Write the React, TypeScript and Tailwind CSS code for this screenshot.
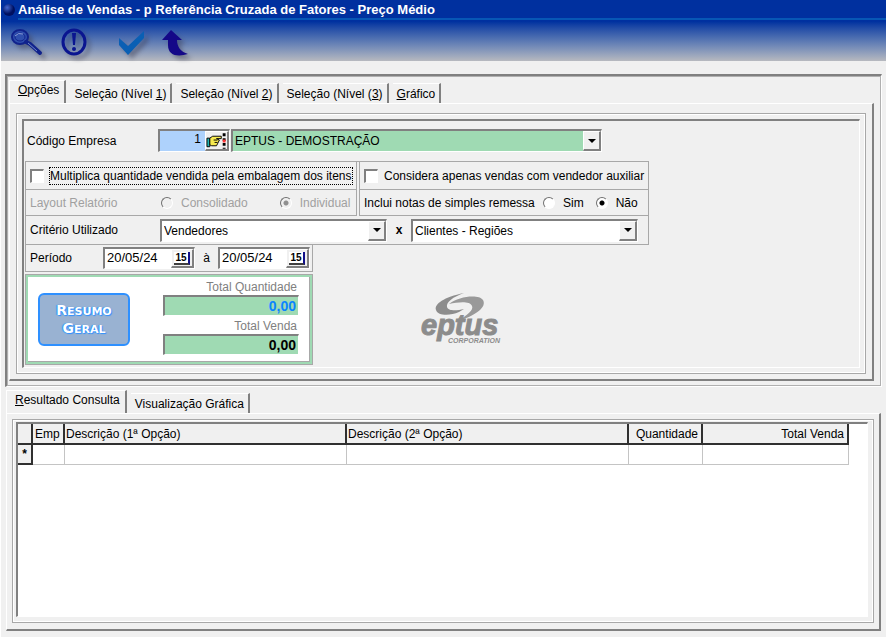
import { useState, type ReactNode } from "react";

const raised =
  "border-t border-l border-r-2 border-b-2 border-t-white border-l-white border-r-[#808080] border-b-[#808080] bg-[#f0f0f0]";
const sunken =
  "border-t-2 border-l-2 border-r border-b border-t-[#808080] border-l-[#808080] border-r-white border-b-white";
const cell = "border-r border-b border-[#a8a8a8]";

function Tab({ active, onClick, children }: { active: boolean; onClick: () => void; children: ReactNode }) {
  return (
    <button
      type="button"
      role="tab"
      aria-selected={active}
      onClick={onClick}
      className={
        active
          ? "h-[23px] border-t border-l border-r-2 border-t-white border-l-white border-r-[#808080] pr-[5px] pb-1 pl-2 leading-4"
          : "h-5 border-t border-r-2 border-t-white border-r-[#808080] px-1 leading-4"
      }
    >
      {children}
    </button>
  );
}

function TabPage({ compact, children }: { compact?: boolean; children: ReactNode }) {
  return (
    <div
      className={`flex grow flex-col border-t border-l border-r-2 border-b-2 border-t-white border-l-white border-r-[#808080] border-b-[#808080] ${
        compact ? "px-[5px] pt-[5px] pb-[6px]" : "px-[6px] pt-[9px] pb-[5px]"
      }`}
    >
      <div className="flex grow flex-col border border-[#a8a8a8]">
        <div className={`flex grow flex-col border border-white ${compact ? "pt-px pr-[4px] pb-[4px] pl-[2px]" : "p-1"}`}>{children}</div>
      </div>
    </div>
  );
}

function Combo({ label, options, tone, className }: { label: string; options: string[]; tone: string; className: string }) {
  return (
    <div className={`relative h-[23px] ${sunken} ${tone} ${className}`}>
      <select aria-label={label} className="block h-full w-full appearance-none bg-transparent pr-5 pl-[2px] leading-4 outline-none">
        {options.map((o) => (
          <option key={o}>{o}</option>
        ))}
      </select>
      <span className={`pointer-events-none absolute inset-y-0 right-0 flex w-[18px] items-center justify-center ${raised}`}>
        <svg width="8" height="4" viewBox="0 0 8 4" aria-hidden="true">
          <path d="M0 0h8L4 4z" fill="#000" />
        </svg>
      </span>
    </div>
  );
}

function DateField({ label }: { label: string }) {
  return (
    <div className={`flex h-[22px] w-[92px] bg-white ${sunken}`}>
      <input aria-label={label} defaultValue="20/05/24" className="w-0 grow pb-[2px] pl-[2px] text-[13px] leading-4 outline-none" />
      <button type="button" aria-label={`Calendário ${label}`} className={`flex w-[23px] items-center justify-center ${raised}`}>
        <span className="h-[13px] border-r-2 border-b-2 border-r-[#10108a] border-b-[#404040] bg-white px-px text-[10px] leading-[11px] font-bold">15</span>
      </button>
    </div>
  );
}

function Radio({ name, label, checked, disabled }: { name: string; label: string; checked?: boolean; disabled?: boolean }) {
  return (
    <label className={`flex items-center gap-2 ${disabled ? "text-[#a0a0a0]" : ""}`}>
      <input
        type="radio"
        name={name}
        defaultChecked={checked}
        disabled={disabled}
        className="h-3 w-3 appearance-none rounded-full border border-t-[#707070] border-r-white border-b-white border-l-[#707070] bg-white checked:bg-[radial-gradient(circle,#000_2px,#fff_3px)] disabled:bg-[#f0f0f0] disabled:checked:bg-[radial-gradient(circle,#909090_2px,#f0f0f0_3px)]"
      />
      {label}
    </label>
  );
}

function Check() {
  return <input type="checkbox" className={`h-[14px] w-[14px] shrink-0 appearance-none bg-white ${sunken} checked:bg-[#808080]`} />;
}

function ToolButton({ label, children }: { label: string; children: ReactNode }) {
  return (
    <button type="button" aria-label={label} className="drop-shadow-[4px_4px_2px_rgba(60,60,80,0.45)]">
      {children}
    </button>
  );
}

function Hand() {
  return (
    <svg width="22" height="18" viewBox="0 0 22 18" aria-hidden="true">
      <path d="M1 6h3v9H1z" fill="#1fb5b5" stroke="#000" />
      <path d="M4 6l3-2h9v2.500h-5l3 1.500-1 2-1 2-1 2H6l-2-1z" fill="#f7ea50" stroke="#000" />
      <path d="M8 8h4M9 10.500h3" stroke="#000" />
      <path d="M19 1v16" stroke="#000" strokeWidth="3" strokeDasharray="3 2" />
      <path d="M19 7.500v3" stroke="#f33" strokeWidth="3" />
    </svg>
  );
}

function Logo() {
  return (
    <svg width="84" height="54" viewBox="0 0 84 54" role="img" aria-label="eptus corporation" className="mt-[18px] ml-[108px]">
      <path d="M43 1C23 5 13 12 15 18c2 6 14 6 23 2l5-3c-8 2-16 2-17-2-1-5 6-10 17-14z" fill="#8d8d8d" />
      <path d="M28 12C38 4 58 2 62 8c4 7-7 15-22 20l-3 1c9-6 16-11 14-15-2-5-13-4-23-2z" fill="#999" />
      <text x="0" y="43" fontFamily="Liberation Sans" fontSize="29" fontWeight="bold" fontStyle="italic" fill="#8c8c8c" stroke="#8c8c8c">
        eptus
      </text>
      <text x="27" y="51" fontFamily="Liberation Sans" fontSize="7" fontWeight="bold" fontStyle="italic" fill="#8c8c8c" stroke="#f0f0f0" strokeWidth="2" paintOrder="stroke">
        CORPORATION
      </text>
    </svg>
  );
}

function Total({ label, tone }: { label: string; tone: string }) {
  return (
    <label className="flex flex-col text-right text-[#808080]">
      <span className="h-[18px] pr-[2px] leading-5">{label}</span>
      <input readOnly value="0,00" className={`h-[21px] w-full bg-[#9fdab3] pr-[2px] text-right text-sm font-bold outline-none ${sunken} ${tone}`} />
    </label>
  );
}

export default function App() {
  const [tab, setTab] = useState(0);
  const [result, setResult] = useState(0);
  const tabs = [
    <><u>O</u>pções</>,
    <>Seleção (Nível <u>1</u>)</>,
    <>Seleção (Nível <u>2</u>)</>,
    <>Seleção (Nível (<u>3</u>)</>,
    <><u>G</u>ráfico</>,
  ];
  return (
    <div className="flex min-h-screen flex-col border-l border-white bg-[#f0f0f0] font-['Liberation_Sans',Arial,sans-serif] text-xs text-black">
      <header className="h-[61px] bg-linear-to-b from-[#00309f] from-35% to-[#b7b9bf]">
        <div className="flex h-5 items-center gap-[3px] pl-[2px]">
          <span className="h-3 w-3 rounded-full bg-[radial-gradient(circle_at_35%_30%,#4468d0,#001060_55%)]" />
          <h1 className="h-5 grow border-b-2 border-[#0757b5] text-[13px] leading-5 font-bold text-white">
            Análise de Vendas - p Referência Cruzada de Fatores - Preço Médio
          </h1>
        </div>
        <div className="flex h-[41px] items-center pt-1 pl-[9px]">
          <ToolButton label="Pesquisar">
            <svg width="34" height="30" viewBox="0 0 34 30">
              <ellipse cx="10" cy="9" rx="8" ry="7" fill="#2f4fae" stroke="#10228c" strokeWidth="2" />
              <ellipse cx="10" cy="9" rx="5" ry="4" fill="none" stroke="#10228c" />
              <path d="M5 8q3-4 8-2" stroke="#8aa0d8" fill="none" />
              <path d="M16 14l4 2 10 9" stroke="#10228c" strokeWidth="4" fill="none" strokeLinecap="round" />
              <path d="M18 15l9 8" stroke="#7088c8" fill="none" />
            </svg>
          </ToolButton>
          <div className="ml-[17px] flex">
            <ToolButton label="Avisos">
              <svg width="26" height="30" viewBox="0 0 26 30">
                <ellipse cx="13" cy="14" rx="11" ry="12" fill="none" stroke="#0a1590" strokeWidth="3" />
                <path d="M11 5h4l-1 12h-2z" fill="#0a1590" />
                <circle cx="13" cy="21" r="2" fill="#0a1590" />
              </svg>
            </ToolButton>
          </div>
          <div className="ml-[31px] flex">
            <ToolButton label="Confirmar">
              <svg width="28" height="28" viewBox="0 0 28 28">
                <path d="M1 9l9 8L26 2v7L10 26 1 16z" fill="#0a5fb4" />
              </svg>
            </ToolButton>
          </div>
          <div className="ml-[15px] flex">
            <ToolButton label="Voltar">
              <svg width="30" height="28" viewBox="0 0 30 28">
                <path d="M10 1l11 10h-5c0 7 4 12 11 14-10 3-20 2-20-9v-5H1z" fill="#140888" />
              </svg>
            </ToolButton>
          </div>
        </div>
      </header>

      <section className={`mt-[13px] mr-[4px] ml-[4px] ${sunken}`}>
        <div className="border border-[#b0b0b0] pt-[3px] pr-[6px] pb-[4px] pl-px">
          <div role="tablist" className="flex items-end gap-1">
            {tabs.map((t, i) => (
              <Tab key={i} active={tab === i} onClick={() => setTab(i)}>{t}</Tab>
            ))}
          </div>
          <TabPage>
            <form className={`pt-2 pb-[2px] pl-px ${sunken}`}>
              <div className="flex items-center">
                <label htmlFor="empresa" className="w-[133px] pl-[2px]">Código Empresa</label>
                <div className={`flex h-[23px] w-[72px] bg-[#aed2fc] ${sunken}`}>
                  <input id="empresa" defaultValue="1" className="w-0 grow pr-1 pb-1 text-right outline-none" />
                  <button type="button" aria-label="Localizar empresa" className={`flex w-6 items-center ${raised}`}>
                    <Hand />
                  </button>
                </div>
                <Combo label="Empresa" options={["EPTUS - DEMOSTRAÇÃO"]} tone="bg-[#9fdab3]" className="ml-px w-[371px]" />
              </div>

              <div className="mt-[9px] w-[624px] border-t border-l border-[#a8a8a8]">
                <div className="flex gap-[2px]">
                  <div className="w-[331px]">
                    <div className={`flex h-7 items-center pl-[4px] ${cell}`}>
                      <label className="flex items-center gap-[6px]">
                        <Check />
                        <span className="outline-1 outline-dotted outline-black">Multiplica quantidade vendida pela embalagem dos itens</span>
                      </label>
                    </div>
                    <fieldset disabled className={`flex h-[26px] items-center pl-[4px] text-[#a0a0a0] ${cell}`}>
                      <span className="w-[131px]">Layout Relatório</span>
                      <div className="flex gap-8">
                        <Radio name="layout" label="Consolidado" disabled />
                        <Radio name="layout" label="Individual" checked disabled />
                      </div>
                    </fieldset>
                  </div>
                  <div className="grow border-l border-[#a8a8a8]">
                    <div className={`flex h-7 items-center pl-[4px] ${cell}`}>
                      <label className="flex items-center gap-[6px]">
                        <Check />
                        Considera apenas vendas com vendedor auxiliar
                      </label>
                    </div>
                    <fieldset className={`flex h-[26px] items-center pl-[4px] ${cell}`}>
                      <span className="w-[179px]">Inclui notas de simples remessa</span>
                      <div className="flex gap-3">
                        <Radio name="notas" label="Sim" />
                        <Radio name="notas" label="Não" checked />
                      </div>
                    </fieldset>
                  </div>
                </div>
                <div className={`flex h-[29px] items-center pl-[4px] ${cell}`}>
                  <span className="w-[130px]">Critério Utilizado</span>
                  <Combo label="Primeiro critério" options={["Vendedores"]} tone="bg-white" className="w-[227px]" />
                  <span className="w-6 text-center font-bold">x</span>
                  <Combo label="Segundo critério" options={["Clientes - Regiões"]} tone="bg-white" className="w-[227px]" />
                </div>
              </div>

              <div className={`flex h-[27px] w-[288px] items-center border-l pl-[4px] ${cell}`}>
                <span className="w-[73px]">Período</span>
                <DateField label="inicial" />
                <span className="w-[23px] text-center">à</span>
                <DateField label="final" />
              </div>

              <div className="mt-[2px] flex items-start">
                <div className="w-[288px] border border-[#a8a8a8] bg-[#9fdab3] p-[2px]">
                  <div className="flex h-[85px] items-start justify-between border-r border-b border-[#a8a8a8] bg-white pr-[10px] pl-[10px]">
                    <button
                      type="button"
                      className="mt-4 h-[53px] w-[92px] rounded-md border-2 border-[#2e90ff] bg-[#99b2d2] font-['DejaVu_Sans',sans-serif] text-[11px] leading-4 font-bold text-white uppercase [text-shadow:1px_1px_1px_#2e90ff,-1px_0_1px_#2e90ff]"
                    >
                      <span className="text-sm leading-4">R</span>esumo<br />
                      <span className="text-sm leading-4">G</span>eral
                    </button>
                    <div className="w-[136px]">
                      <Total label="Total Quantidade" tone="text-[#0a84ff]" />
                      <Total label="Total Venda" tone="text-black" />
                    </div>
                  </div>
                </div>
                <Logo />
              </div>
            </form>
          </TabPage>
        </div>
      </section>

      <section className="mt-[3px] mr-[5px] mb-[6px] ml-[5px] flex grow flex-col">
        <div role="tablist" className="flex items-end gap-1">
          <Tab active={result === 0} onClick={() => setResult(0)}><u>R</u>esultado Consulta</Tab>
          <Tab active={result === 1} onClick={() => setResult(1)}>Visualização Gráfica</Tab>
        </div>
        <TabPage compact>
          <div className={`grow bg-white ${sunken}`}>
            <table className="w-[830px] table-fixed border-collapse text-left">
              <colgroup>
                <col className="w-[14px]" />
                <col className="w-8" />
                <col className="w-[282px]" />
                <col className="w-[282px]" />
                <col className="w-[74px]" />
                <col className="w-[146px]" />
              </colgroup>
              <thead>
                <tr className="h-5 bg-[#f0f0f0] [&>th]:border-r-2 [&>th]:border-b-2 [&>th]:border-[#303030] [&>th]:p-0 [&>th]:font-normal [&>th]:leading-4">
                  <th />
                  <th><span className="pl-[2px]">Emp</span></th>
                  <th><span className="pl-px">Descrição (1ª Opção)</span></th>
                  <th><span className="pl-px">Descrição (2ª Opção)</span></th>
                  <th className="text-right"><span className="pr-[3px]">Quantidade</span></th>
                  <th className="text-right"><span className="pr-[3px]">Total Venda</span></th>
                </tr>
              </thead>
              <tbody>
                <tr className="h-5 [&>td]:border-r [&>td]:border-b [&>td]:border-[#c4c4c4]">
                  <th className="border-r-2 border-b-2 border-[#303030] bg-[#f0f0f0] p-0 text-center leading-4">*</th>
                  <td /><td /><td /><td /><td />
                </tr>
              </tbody>
            </table>
          </div>
        </TabPage>
      </section>
    </div>
  );
}
